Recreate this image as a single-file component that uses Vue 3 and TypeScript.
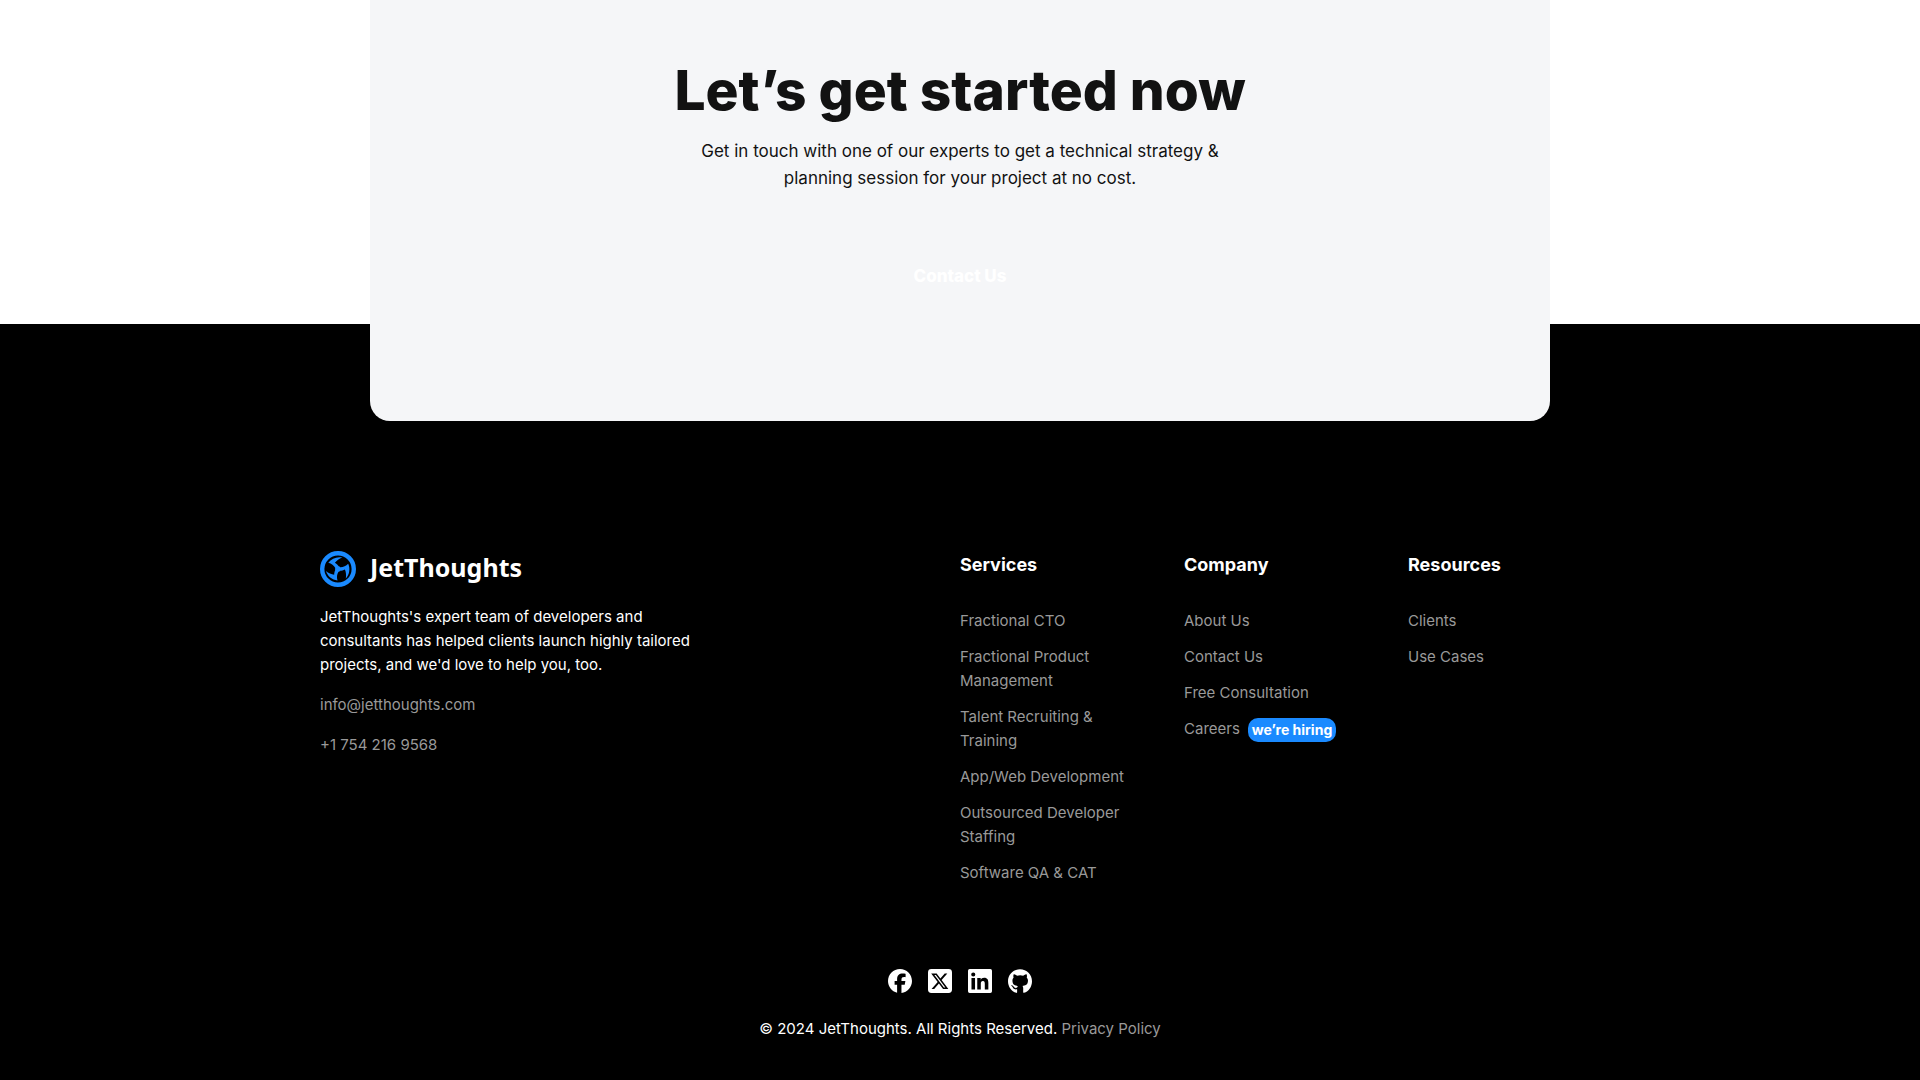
<script setup lang="ts">
interface FooterLink {
  label: string
  badge?: string
}

interface FooterColumn {
  title: string
  links: FooterLink[]
}

interface SocialLink {
  name: string
  path: string
}

const columns: FooterColumn[] = [
  {
    title: 'Services',
    links: [
      { label: 'Fractional CTO' },
      { label: 'Fractional Product Management' },
      { label: 'Talent Recruiting & Training' },
      { label: 'App/Web Development' },
      { label: 'Outsourced Developer Staffing' },
      { label: 'Software QA & CAT' },
    ],
  },
  {
    title: 'Company',
    links: [
      { label: 'About Us' },
      { label: 'Contact Us' },
      { label: 'Free Consultation' },
      { label: 'Careers', badge: 'we’re hiring' },
    ],
  },
  {
    title: 'Resources',
    links: [{ label: 'Clients' }, { label: 'Use Cases' }],
  },
]

const bladeAngles = [0, 120, 240]

const socials: SocialLink[] = [
  {
    name: 'Facebook',
    path: 'M24 12.07C24 5.4 18.63 0 12 0S0 5.4 0 12.07C0 17.73 3.87 22.48 9.1 23.79V15.7H6.6v-3.63h2.5V10.5c0-4.1 1.85-6 5.87-6 .76 0 2.08.15 2.62.3v3.33c-.28-.03-.78-.05-1.4-.05-1.97 0-2.73.75-2.73 2.7v1.29h3.93l-.68 3.63h-3.25V24C19.4 23.28 24 18.22 24 12.07z',
  },
  {
    name: 'X',
    path: 'M3.4 0h17.2A3.4 3.4 0 0 1 24 3.4v17.2a3.4 3.4 0 0 1-3.4 3.4H3.4A3.4 3.4 0 0 1 0 20.6V3.4A3.4 3.4 0 0 1 3.4 0zM19.34 4.5h-2.63l-4.33 4.95L8.63 4.5H3.2l6.48 8.48L3.54 20h2.63l4.74-5.42L15.05 20h5.3l-6.75-8.94zM17.33 18.43h-1.45L6.34 5.99h1.56z',
  },
  {
    name: 'LinkedIn',
    path: 'M1.7 0h20.6A1.7 1.7 0 0 1 24 1.7v20.6a1.7 1.7 0 0 1-1.7 1.7H1.7A1.7 1.7 0 0 1 0 22.3V1.7A1.7 1.7 0 0 1 1.7 0zM3.48 9.12v11.45h3.57V9.12zM5.26 3.43a2.07 2.07 0 1 0 0 4.14 2.07 2.07 0 0 0 0-4.14zM9.26 9.12v11.45h3.55v-5.67c0-1.49.28-2.94 2.13-2.94 1.83 0 1.85 1.7 1.85 3.03v5.58h3.56v-6.28c0-3.08-.66-5.45-4.26-5.45-1.73 0-2.89.95-3.36 1.85h-.05V9.12z',
  },
  {
    name: 'GitHub',
    path: 'M8.06 19.32c0 .1-.11.17-.25.17-.16.02-.27-.06-.27-.17 0-.1.11-.17.25-.17.15-.02.27.06.27.17zM12 .3C5.24.3 0 5.44 0 12.2c0 5.4 3.41 10.03 8.27 11.66.62.11.85-.27.85-.59 0-.3-.01-1.98-.01-3 0 0-3.41.73-4.13-1.45 0 0-.56-1.42-1.36-1.79 0 0-1.12-.77.08-.75 0 0 1.21.1 1.88 1.26 1.07 1.88 2.86 1.34 3.56 1.02.11-.78.43-1.32.78-1.64-2.73-.3-5.48-.7-5.48-5.39 0-1.34.37-2.01 1.15-2.87-.13-.32-.54-1.62.13-3.31 1.02-.32 3.37 1.32 3.37 1.32a11.53 11.53 0 0 1 6.13 0s2.35-1.64 3.37-1.32c.67 1.69.26 2.99.13 3.31.78.86 1.26 1.53 1.26 2.87 0 4.7-2.87 5.08-5.6 5.39.45.38.83 1.11.83 2.25 0 1.64-.01 3.66-.01 4.06 0 .32.23.7.85.59C20.91 22.23 24 17.6 24 12.2 24 5.44 18.76.3 12 .3z',
  },
]
</script>

<template>
  <div class="page">
    <section class="cta">
      <div class="cta-card">
        <h2 class="cta-title">Let’s get started now</h2>
        <p class="cta-text">
          Get in touch with one of our experts to get a technical strategy &amp; planning session for
          your project at no cost.
        </p>
        <a class="cta-button" href="#">Contact Us</a>
      </div>
    </section>

    <footer class="footer">
      <div class="footer-inner">
        <div class="about">
          <a class="brand" href="#" aria-label="JetThoughts">
            <svg class="brand-mark" viewBox="0 0 36 36" aria-hidden="true">
              <circle cx="18" cy="18" r="15.8" fill="none" stroke="#1a8aff" stroke-width="4.4" />
              <g fill="#1a8aff">
                <circle cx="18" cy="18" r="2.4" />
                <path
                  v-for="angle in bladeAngles"
                  :key="angle"
                  :transform="`rotate(${angle} 18 18)`"
                  d="M22.3 6.5C17 5.3 11.5 7.4 8.3 11.8c3.2.8 5.7 2.7 7 5.2l-.4 2.2 4.3-2.6c-.8-2.1-2.3-3.7-4.3-4.8 1.8-2.3 4.2-4.1 7.4-5.3z"
                />
              </g>
            </svg>
            <span class="brand-name">JetThoughts</span>
          </a>
          <p class="about-text">
            JetThoughts's expert team of developers and consultants has helped clients launch highly
            tailored projects, and we'd love to help you, too.
          </p>
          <a class="contact" href="#">info@jetthoughts.com</a>
          <a class="contact" href="#">+1 754 216 9568</a>
        </div>

        <nav v-for="column in columns" :key="column.title" :aria-label="column.title">
          <h3 class="column-title">{{ column.title }}</h3>
          <ul class="links">
            <li v-for="link in column.links" :key="link.label">
              <a href="#">{{ link.label }}</a>
              <span v-if="link.badge" class="badge">{{ link.badge }}</span>
            </li>
          </ul>
        </nav>
      </div>

      <div class="socials">
        <a v-for="social in socials" :key="social.name" href="#" :aria-label="social.name">
          <svg viewBox="0 0 24 24" aria-hidden="true">
            <path :d="social.path" fill="#fff" fill-rule="evenodd" />
          </svg>
        </a>
      </div>
      <p class="legal">© 2024 JetThoughts. All Rights Reserved. <a href="#">Privacy Policy</a></p>
    </footer>
  </div>
</template>

<style>
body {
  margin: 0;
  background: #000;
}
</style>

<style scoped>
.page {
  font-family: Inter, 'Liberation Sans', sans-serif;
  font-size: 15px;
  line-height: 24px;
  color: #fff;
  background: #000;
}

a {
  color: #999;
  text-decoration: none;
}

.cta {
  background: linear-gradient(#fff, #fff) top / 100% calc(100% - 97px) no-repeat #000;
}

.cta-card {
  box-sizing: border-box;
  display: flex;
  flex-direction: column;
  align-items: center;
  max-width: 1180px;
  margin: 0 auto;
  padding: 54px 32px 120px;
  border-radius: 0 0 20px 20px;
  background: #f5f6f8;
  color: #121212;
  text-align: center;
}

.cta-title {
  margin: 0;
  font-size: 55px;
  font-weight: 800;
  line-height: 72px;
}

.cta-text {
  max-width: 530px;
  margin: 12px 0 0;
  font-size: 17px;
  line-height: 27px;
}

.cta-button {
  margin-top: 59px;
  padding: 13px 32px;
  color: #fff;
  font-size: 17px;
  font-weight: 800;
}

.footer {
  padding: 130px 32px 38px;
}

.footer-inner {
  display: grid;
  grid-template-columns: 608px repeat(3, minmax(0, 1fr));
  gap: 32px;
  max-width: 1280px;
  margin: 0 auto;
}

.brand {
  display: flex;
  align-items: center;
  gap: 14px;
}

.brand-mark {
  width: 36px;
  height: 36px;
}

.brand-name {
  padding-bottom: 4px;
  color: #fff;
  font-family: 'Noto Sans', sans-serif;
  font-size: 25px;
  font-weight: 700;
}

.about-text {
  max-width: 376px;
  margin: 18px 0 16px;
}

.contact {
  display: block;
  margin-bottom: 16px;
}

.column-title {
  margin: 0 0 31px;
  font-size: 18px;
  font-weight: 700;
  line-height: 27px;
}

.links {
  margin: 0;
  padding: 0;
  list-style: none;
}

.links li {
  max-width: 176px;
  margin-bottom: 12px;
}

.badge {
  display: inline-block;
  margin-left: 8px;
  padding: 0 4px;
  border-radius: 10px;
  background: #1a8aff;
  font-size: 14px;
  font-weight: 700;
  vertical-align: middle;
}

.socials {
  display: flex;
  justify-content: center;
  gap: 16px;
  margin-top: 72px;
}

.socials a,
.socials svg {
  display: block;
  width: 24px;
  height: 24px;
}

.legal {
  margin: 24px 0 0;
  text-align: center;
}
</style>
